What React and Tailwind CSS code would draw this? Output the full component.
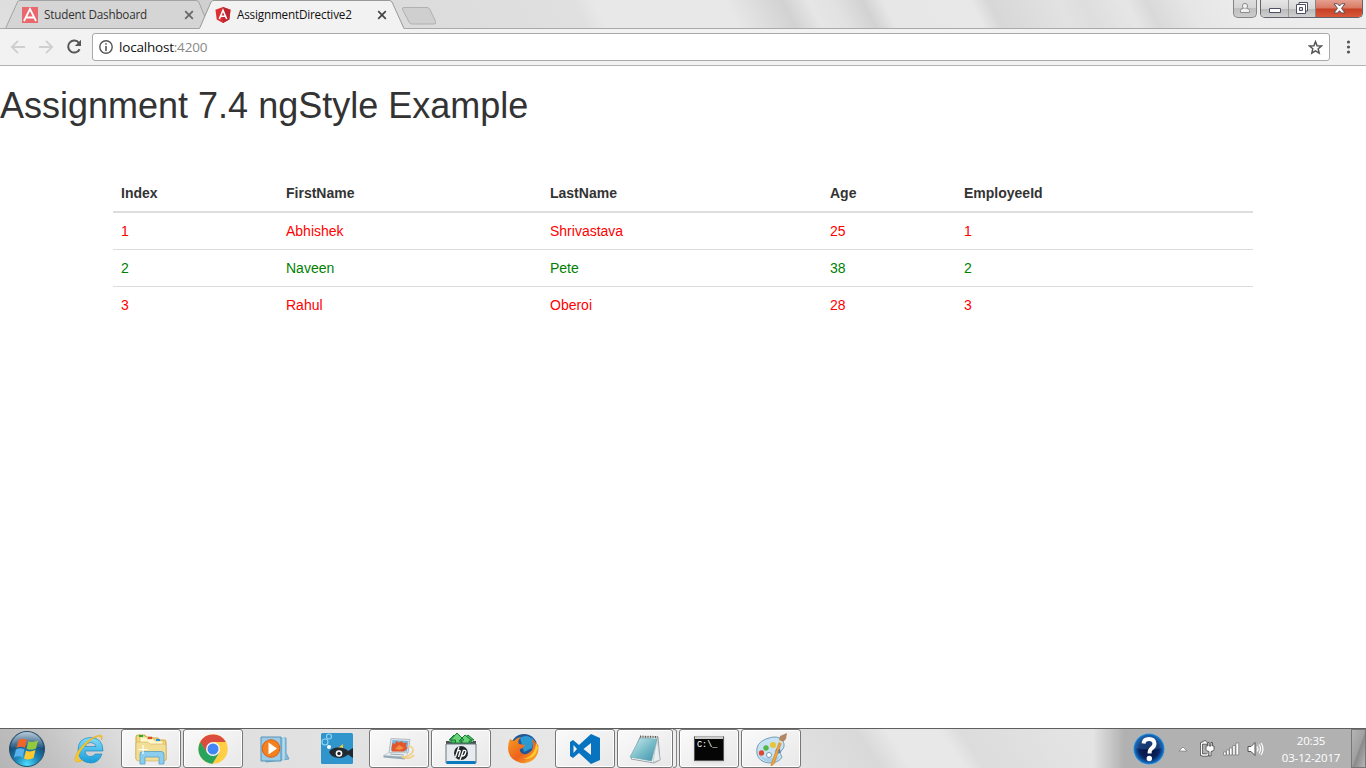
import React from "react";

const people = [
  { id: 1, first: "Abhishek", last: "Shrivastava", age: 25 },
  { id: 2, first: "Naveen", last: "Pete", age: 38 },
  { id: 3, first: "Rahul", last: "Oberoi", age: 28 },
];

function CloseX({ className }) {
  return (
    <svg className={className} width="10" height="10" viewBox="0 0 10 10">
      <path d="M1.2 1.2 8.8 8.8M8.8 1.2 1.2 8.8" stroke="currentColor" strokeWidth="1.7" />
    </svg>
  );
}

function TabStrip() {
  return (
    <div className="relative flex h-[29px] justify-between bg-[linear-gradient(63deg,#e0e0e0_0%,#cfcfcf_15%,#dcdcdc_31%,#e0e0e0_42.5%,#e8e8e8_44%,#e8e8e8_53.5%,#d2d2d2_57.7%,#e6e6e6_59.6%,#e1e1e1_61.5%,#d2d2d2_63.5%,#e7e7e7_65%,#e8e8e8_71.3%,#d7d7d7_72.6%,#e2e2e2_77.5%,#dedede_79.5%,#e6e6e6_82.5%,#d9d9d9_84%,#e6e6e6_87%,#ececec_91%,#eeeeee_100%)]">
      <svg className="absolute left-0 top-0" width="1366" height="29" viewBox="0 0 1366 29">
        <path d="M0 28.5H1366" stroke="#a9a9a9" />
        <path d="M5.5 28.5 17.5 2Q18 .5 20 .5H196Q198 .5 198.8 2L205 17 200 28.5Z" fill="#d5d5d5" stroke="#a3a3a3" />
        <path d="M199.500 28.500 211 2Q212 .5 214 .5H389Q391 .5 392 2L404 28.500V29H199Z" fill="#f2f2f2" />
        <path d="M199.500 28.500 211 2Q212 .5 214 .5H389Q391 .5 392 2L404 28.500" fill="none" stroke="#999" />
        <path d="M404 7.500H427Q429 7.500 430 9.500L435.500 21.500Q436.500 24 434 24H412Q410 24 409 22L402.500 9.500Q402 7.500 404 7.500Z" fill="#cfcfcf" stroke="#b0b0b0" />
      </svg>
      <div className="relative flex h-[29px] pl-[22px] font-['Open_Sans','Noto_Sans',sans-serif] text-[11.700px] tracking-[-0.180px] text-[#333]">
        <div className="flex w-[193px] items-center">
          <svg width="16" height="16" viewBox="0 0 16 16">
            <path fill="#e8686d" d="M0 0h16v16H0z" />
            <path d="M2 14 8 2l6 12M4.500 10.500h7" fill="none" stroke="#fff" strokeWidth="1.800" />
          </svg>
          <span className="ml-[6px] w-[134px] whitespace-nowrap">Student Dashboard</span>
          <CloseX className="ml-[6px] text-[#666]" />
        </div>
        <div className="flex w-[190px] items-center text-[#111]">
          <svg width="16" height="16" viewBox="0 0 16 16">
            <path d="M8 0 15.500 2.700 14.300 12.400 8 16 1.700 12.400.5 2.700Z" fill="#dd3036" />
            <path d="M8 0 15.500 2.700 14.300 12.400 8 16Z" fill="#bd2630" />
            <path d="M4.300 12 8 3.200 11.700 12M5.700 9.200h4.600" fill="none" stroke="#fff" strokeWidth="1.600" />
          </svg>
          <span className="ml-[6px] w-[134px] whitespace-nowrap">AssignmentDirective2</span>
          <CloseX className="ml-[6px] text-[#444]" />
        </div>
      </div>
      <div className="relative mr-[3px] flex h-[18px] gap-[3px]">
        <div className="flex w-[24px] justify-center rounded-b-[5px] border border-t-0 border-[#858585] bg-[linear-gradient(#dedede_0%,#d5d5d5_45%,#bfbfbf_50%,#cccccc_100%)] pt-[2px]">
          <svg width="12" height="12" viewBox="0 0 12 12" fill="#f1f1f1" stroke="#8c8c8c">
            <path d="M1.500 10.500V8.500Q1.500 6.500 4 6.500H8Q10.500 6.500 10.500 8.500V10.500Z" />
            <circle cx="6" cy="4" r="2.600" />
            <path d="M4.500 6.500H7.500V7.500H4.500Z" stroke="none" />
          </svg>
        </div>
        <div className="flex w-[103px] overflow-hidden rounded-b-[5px] border border-t-0 border-[#62626a]">
          <div className="flex w-[28px] justify-center border-r border-[#999] bg-[linear-gradient(#e6e6e6_0%,#d7d7d7_50%,#b9b9b9_52%,#d0d0d0_100%)] pt-[8px]">
            <svg width="12" height="6" viewBox="0 0 12 6"><path d="M.5.5h11v4H.5z" fill="#fff" stroke="#4e4e66" /></svg>
          </div>
          <div className="flex w-[27px] justify-center border-r border-[#888] bg-[linear-gradient(#e6e6e6_0%,#d7d7d7_50%,#b9b9b9_52%,#d0d0d0_100%)] pt-[2px]">
            <svg width="12" height="12" viewBox="0 0 12 12" fill="#fff" stroke="#4e4e66">
              <path d="M3 .5h8.500V9H3z" /><path d="M.5 2.500H9.500v9H.5z" /><path d="M3.500 5.500h3v3H3.500z" fill="#ddd" />
            </svg>
          </div>
          <div className="flex flex-1 justify-center bg-[linear-gradient(#e5a08f_0%,#d97863_48%,#c63f24_52%,#d9583b_100%)] pt-[3px]">
            <svg width="13" height="11" viewBox="0 0 13 11">
              <path d="M1 .8H4.500L6.500 3 8.500.8H12L8.500 5.300 12 10H8.500L6.500 7.700 4.500 10H1L4.500 5.300Z" fill="#fff" stroke="#59505e" />
            </svg>
          </div>
        </div>
      </div>
    </div>
  );
}

function Toolbar() {
  return (
    <div className="flex h-[37px] items-center border-b border-[#b3b3b3] bg-[#f2f2f2] pl-[10px]">
      <svg width="74" height="16" viewBox="0 0 74 16" fill="none" strokeWidth="1.800">
        <path d="M15 8H2M8 1.800 1.800 8 8 14.200" stroke="#cfcfcf" />
        <path d="M29 8h13M36 1.800 42.200 8 36 14.200" stroke="#cfcfcf" />
        <path d="M69 4A6 6 0 1 0 69.600 10.200" stroke="#555" strokeWidth="2" />
        <path d="M71 .8V7H64.800Z" fill="#555" />
      </svg>
      <div className="ml-[8px] flex h-[28px] w-[1238px] items-center rounded-[3px] border border-[#a9a9a9] bg-white px-[6px]">
        <svg width="14" height="14" viewBox="0 0 14 14">
          <circle cx="7" cy="7" r="6.200" fill="none" stroke="#555" strokeWidth="1.400" />
          <path d="M6.200 3.200h1.600v1.600H6.200zM6.200 6h1.600v5H6.200z" fill="#555" />
        </svg>
        <span className="ml-[6px] flex-1 font-['Open_Sans','Noto_Sans',sans-serif] text-[13.500px] tracking-[-0.200px] text-[#111]">
          localhost<span className="text-[#888]">:4200</span>
        </span>
        <svg width="15" height="15" viewBox="0 0 15 15">
          <path d="M7.500 1.700 9.100 5.700 13.500 6 10.200 8.800 11.200 13.200 7.500 10.900 3.800 13.200 4.800 8.800 1.500 6 5.900 5.700Z" fill="none" stroke="#555" strokeWidth="1.500" />
        </svg>
      </div>
      <svg className="ml-[16px]" width="5" height="14" viewBox="0 0 5 14" fill="#555">
        <circle cx="2.500" cy="2" r="1.600" /><circle cx="2.500" cy="7" r="1.600" /><circle cx="2.500" cy="12" r="1.600" />
      </svg>
    </div>
  );
}

function Page() {
  return (
    <main className="flex-1 bg-white text-[14px] leading-[20px] text-[#333]">
      <h1 className="pt-[20px] text-[36px] font-normal leading-[40px]">Assignment 7.4 ngStyle Example</h1>
      <table className="mx-[113px] mt-[49px] w-[1140px] table-fixed border-collapse text-left">
        <colgroup>
          <col className="w-[165px]" /><col className="w-[264px]" /><col className="w-[280px]" /><col className="w-[134px]" /><col className="w-[297px]" />
        </colgroup>
        <thead>
          <tr className="h-[37px] border-b-2 border-[#ddd]">
            {["Index", "FirstName", "LastName", "Age", "EmployeeId"].map((h) => (
              <th key={h} className="p-[8px] font-bold">{h}</th>
            ))}
          </tr>
        </thead>
        <tbody>
          {people.map((p) => (
            <tr key={p.id} className={`h-[37px] border-t border-[#ddd] first:border-t-2 ${p.age > 30 ? "text-[#008000]" : "text-[#ff0000]"}`}>
              {[p.id, p.first, p.last, p.age, p.id].map((v, i) => (
                <td key={i} className="p-[8px]">{v}</td>
              ))}
            </tr>
          ))}
        </tbody>
      </table>
    </main>
  );
}

function StartOrb() {
  return (
    <svg width="40" height="38" viewBox="0 0 40 38">
      <defs>
        <radialGradient id="orb" cx=".5" cy=".95" r=".95"><stop offset="0" stopColor="#4de0ff" /><stop offset=".35" stopColor="#1d86b8" /><stop offset=".7" stopColor="#174a76" /><stop offset="1" stopColor="#5c87a5" /></radialGradient>
        <linearGradient id="orbShine" x2="0" y2="1"><stop stopColor="#fff" stopOpacity=".55" /><stop offset="1" stopColor="#fff" stopOpacity=".08" /></linearGradient>
      </defs>
      <circle cx="20" cy="19" r="17.500" fill="url(#orb)" stroke="#294d68" />
      <path d="M4 18A16 16 0 0 1 36 18Q20 13 4 18Z" fill="url(#orbShine)" />
      <path d="M11.500 10Q15.500 7.500 20 10L18 18Q14 15.500 9.500 18Z" fill="#ef652b" />
      <path d="M21.500 11Q25 13 31 10.500L29 18.500Q23.500 21 19.500 18.500Z" fill="#93c93d" />
      <path d="M9 19.500Q13.500 17 17.500 19.500L15.500 27.500Q12 25 7 27.500Z" fill="#58b2ec" />
      <path d="M19 20.500Q23 22.500 28.500 20L26.500 28Q21.500 30.500 17 28.500Z" fill="#fdc92f" />
    </svg>
  );
}

function IeIcon() {
  return (
    <svg width="32" height="32" viewBox="0 0 32 32">
      <defs><linearGradient id="ie" x2="0" y2="1"><stop stopColor="#83dcfb" /><stop offset="1" stopColor="#159bdb" /></linearGradient></defs>
      <path d="M30 18H12Q12.500 23.500 17.500 23.500 20.500 23.500 22 21H29Q26 30 17.500 30 5 29 5 17 5 5 17.500 4.500 30 5 30 18ZM12 13.500H23Q22 9.500 17.500 9.500T12 13.500Z" fill="url(#ie)" stroke="#2288bd" strokeWidth=".7" />
      <path d="M28.500 7Q31 1 25 2.500 18 4 9.500 12.500 1 22 2 27 3 31 10 27 5 28 5 24.500 6 18 15 9.500 24 2 27.500 3.500 29 4.500 28.500 7Z" fill="#f8c928" stroke="#e5a814" strokeWidth=".5" />
    </svg>
  );
}

function FolderIcon() {
  return (
    <svg width="34" height="32" viewBox="0 0 34 32">
      <path d="M2 26V4Q2 2 4 2H11L12 4H18L19 5H24L25 7H30Q32 7 32 9V27H3Z" fill="#f4d978" stroke="#caa644" />
      <path d="M6 4H13V6H20L21 8H29V25H6Z" fill="#fff8cf" stroke="#d8b960" strokeWidth=".6" />
      <path d="M2 11Q2 9 4 9H14L16 11H30Q32 11 32 13V25Q32 28 30 28H4Q2 28 2 25Z" fill="#f2df95" stroke="#cdb061" strokeWidth=".6" />
      <path d="M5 3H9" stroke="#20ae37" strokeWidth="2" /><path d="M14 5H18" stroke="#e04736" strokeWidth="2" /><path d="M22 7H26" stroke="#2a91d9" strokeWidth="2" />
      <path d="M6 31V21Q6 18.500 9 18.500H27Q30 18.500 30 21V31H25V24H11V31Z" fill="#8bcdee" stroke="#5b9ec2" strokeWidth=".8" />
      <path d="M9 12V21M4.500 16.500H13.500" stroke="#fff" strokeWidth="1.200" />
    </svg>
  );
}

function ChromeIcon() {
  return (
    <svg width="32" height="32" viewBox="0 0 32 32">
      <circle cx="16" cy="16" r="14.700" fill="#ffce43" />
      <path d="M16 16 16 9H28.800A14.700 14.700 0 0 0 3.200 9L10 20Z" fill="#db4b3e" />
      <path d="M3.200 9A14.700 14.700 0 0 0 15.500 30.700L22 20 16 22.500 10 19.500Z" fill="#27a45d" />
      <circle cx="16" cy="16" r="7" fill="#f5f5f5" /><circle cx="16" cy="16" r="5.500" fill="#4285f4" />
    </svg>
  );
}

function MediaIcon() {
  return (
    <svg width="32" height="32" viewBox="0 0 32 32">
      <path d="M4 5H27V20L30 26 7 29Z" fill="#86bad8" stroke="#6ba3c4" />
      <path d="M25 5V27M22 4H24V28" fill="none" stroke="#c5e8f8" />
      <path d="M2 4H22V28H2Z" fill="#9acbe7" stroke="#5793b5" />
      <circle cx="12" cy="15.500" r="8.800" fill="#f48120" stroke="#dd5f0e" /><path d="M9.500 9.500 18 15.500 9.500 21.500Z" fill="#fff" />
    </svg>
  );
}

function FishIcon() {
  return (
    <svg width="32" height="32" viewBox="0 0 32 32">
      <rect width="32" height="31" rx="1.500" fill="#3095cc" />
      <g fill="none" stroke="#94d5f4" strokeWidth="1.100"><circle cx="8" cy="3.500" r="2.500" /><circle cx="4" cy="9" r="3" /></g>
      <circle cx="8" cy="14" r="2" fill="#fff" /><path d="M17 15 22 11V15Z" fill="#f6c936" />
      <path d="M8 19Q11 14 18 14.500 24 14.500 27 18L32 15V25L27 21.500Q22 26 15 24.500 10 23.500 8 19Z" fill="#222a31" />
      <circle cx="18" cy="20.500" r="3.300" fill="#fff" /><circle cx="18" cy="20.500" r="1.700" fill="#222" />
    </svg>
  );
}

function LaptopIcon() {
  return (
    <svg width="34" height="32" viewBox="0 0 34 32">
      <path d="M9 5.500 28 6.500 26 20 7 19.500Z" fill="#dfe5ea" stroke="#b1bcc6" />
      <path d="M10.500 7 26.500 8 25 18.500 9 18Z" fill="#77b7df" />
      <path d="M9.500 15 10.500 10 13 11 14 8 17 9.500 20 8 21 10 25 9.500 24 13 25.500 15 22 18.500H10Z" fill="#e3552b" />
      <path d="M13 16 17 12 22 15 18 17Z" fill="#f28d45" />
      <path d="M7 19.500 26 20 23 24 1.500 22.500Z" fill="#eef2f5" stroke="#b6c2ca" strokeWidth=".7" /><path d="M8 21 22 22" stroke="#9ba9b4" />
      <path d="M1.500 22.500V24.500L23 26.500V24Z" fill="#96a9b7" />
      <path d="M26 13Q32 14 31 18 29 24 20 24 28 27 32 22" fill="none" stroke="#f3cd80" strokeWidth="1.500" />
    </svg>
  );
}

function HpIcon() {
  return (
    <svg width="32" height="34" viewBox="0 0 32 34">
      <path d="M1 12V9H4L6 10H27L28 9H31V12Z" fill="#4a5258" />
      <path d="M6 11V8H4L9 3 15 8H13V11ZM19 11V8H17L23 3 29 8H26V11Z" fill="#47bd61" stroke="#187b36" />
      <path d="M10.500 11V8H5.500L12 1 19 8H16V11ZM17 11V9H14L20 3 27 9H24V11Z" fill="#66d477" stroke="#187b36" />
      <path d="M1 12H31V31H1Z" fill="#e7ebef" stroke="#6b7982" /><path d="M1.500 29H30.500V32H1.500Z" fill="#087bbe" />
      <circle cx="16" cy="21" r="7" fill="#20272c" />
      <path d="M14 14.500 10.500 25M12.500 19Q16 17.500 15 20L13.500 25M18.500 18 15 28M18 18.500Q22 17.500 20.500 21 19.500 24.500 16.500 24" fill="none" stroke="#fff" strokeWidth="1.300" />
    </svg>
  );
}

function FirefoxIcon() {
  return (
    <svg width="32" height="32" viewBox="0 0 32 32">
      <defs><linearGradient id="fox" x2="1" y2="1"><stop stopColor="#f79c20" /><stop offset=".55" stopColor="#ed621e" /><stop offset="1" stopColor="#fac22d" /></linearGradient></defs>
      <circle cx="17" cy="14.500" r="13.500" fill="#215795" /><path d="M13 5Q20 0 27 7L25 15 17 19Z" fill="#2d99d1" />
      <path d="M3 6 7 8Q9 5 14 4 10 8 12 11L18 12Q17 15 13 16 12 19 16 21 21 22 25 17 27 12 25 6 29 8 30 13L31 11Q33 21 26 27 18 33 9 28 1 24 1 15 1 10 3 6Z" fill="url(#fox)" />
      <path d="M29 9Q29 22 17 26 28 27 31 15Z" fill="#ffcb2d" />
    </svg>
  );
}

function CodeIcon() {
  return (
    <svg width="32" height="32" viewBox="0 0 32 32">
      <path d="M22 1 31 5V27L22 31 10 20 4 25 1 23V9L4 7 10 12ZM22 10 14.500 16 22 22ZM4.500 12V20L8 16Z" fill="#0873be" fillRule="evenodd" />
    </svg>
  );
}

function NotepadIcon() {
  return (
    <svg width="34" height="34" viewBox="0 0 34 34">
      <defs><linearGradient id="note" x2="1" y2="1"><stop stopColor="#d2eef1" /><stop offset=".55" stopColor="#75bac7" /><stop offset="1" stopColor="#438eab" /></linearGradient></defs>
      <path d="M12 5 30 5 32 28 26 31 3 27Z" fill="#f8fbfc" stroke="#9ba3a6" />
      <path d="M29 6 32 28 25 30Z" fill="#e9eeef" stroke="#a0aaac" strokeWidth=".5" />
      <path d="M12 6 29 7 23.500 29 2 25Z" fill="url(#note)" stroke="#67a1ae" strokeWidth=".6" />
      <path d="M12 4.500 30 5" stroke="#625d50" strokeWidth="2" strokeDasharray="1 1.500" />
    </svg>
  );
}

function CommandIcon() {
  return (
    <div className="h-[25px] w-[30px] border border-[#555] border-t-[#b2b2b2] bg-[#050505] font-['Liberation_Mono',monospace] text-[8.500px] leading-[9px] text-white shadow">
      <div className="h-[2px] bg-[#ccc]" />
      <div className="pl-[2px] pt-[2px]">C:\_</div>
    </div>
  );
}

function PaintIcon() {
  return (
    <svg width="34" height="34" viewBox="0 0 34 34">
      <path d="M3 22Q1 11 12 7 24 2 29 9 32 15 27 19 25 21 28 25 25 31 15 31 5 30 3 22Z" fill="#c7e2f2" stroke="#729ebc" />
      <path d="M5 23Q14 29 26 24 23 31 15 30 8 29 5 23Z" fill="#a9cee8" />
      <circle cx="15" cy="23" r="2.500" fill="#fff" stroke="#7598ae" />
      <circle cx="7.500" cy="21" r="2.700" fill="#d94735" /><circle cx="12" cy="16" r="2.700" fill="#55b548" /><circle cx="19" cy="13" r="3" fill="#eac533" /><circle cx="24" cy="19" r="2.500" fill="#487bc8" />
      <path d="M28 9 20 32 17 34 17.500 31 26 8Z" fill="#f1a63b" stroke="#c77726" strokeWidth=".6" />
      <path d="M25 8 26 4 33 1 32 7 29 10Z" fill="#b18863" /><path d="M25 8 29.500 10 28.500 12 25 10Z" fill="#e0dec8" />
    </svg>
  );
}

const apps = [
  { name: "ie", Icon: IeIcon },
  { name: "files", Icon: FolderIcon, open: true },
  { name: "chrome", Icon: ChromeIcon, open: true },
  { name: "media", Icon: MediaIcon },
  { name: "fish", Icon: FishIcon },
  { name: "laptop", Icon: LaptopIcon, open: true },
  { name: "hp", Icon: HpIcon, open: true },
  { name: "firefox", Icon: FirefoxIcon },
  { name: "code", Icon: CodeIcon, open: true },
  { name: "notepad", Icon: NotepadIcon, open: true, stacked: true },
  { name: "command", Icon: CommandIcon, open: true },
  { name: "paint", Icon: PaintIcon, open: true },
];

function Taskbar() {
  return (
    <footer className="flex h-[40px] justify-between border-t border-[#5e5e5e] bg-[linear-gradient(90deg,transparent_0%,transparent_80%,#b1b1b1_82.3%,#b1b1b1_100%),linear-gradient(57deg,#b5b5b5_0%,#c1c1c1_4%,#dcdcdc_10%,#e0e0e0_20%,#e5e5e5_35%,#eaeaea_55%,#e0e0e0_58%,#d9d9d9_63.3%,#e8e8e8_65.5%,#e8e8e8_69.3%,#dcdcdc_70.8%,#e4e4e4_79%,#e4e4e4_100%)]">
      <div className="flex gap-[2px]">
        <div className="flex w-[57px] items-center pl-[7px]"><StartOrb /></div>
        {apps.map(({ name, Icon, open, stacked }) => (
          <div key={name} className="flex w-[60px]">
            <div className={`flex items-center justify-center ${stacked ? "w-[56px]" : "w-[60px]"} ${open ? "rounded-[3px] border border-[#777] bg-gradient-to-br from-[#fafafa] to-[#e8e8e8] shadow-[inset_0_0_0_1px_#ffffff]" : ""}`}>
              <Icon />
            </div>
            {stacked && <div className="w-[4px] rounded-r-[3px] border border-l-0 border-[#858585] bg-[#eee]" />}
          </div>
        ))}
      </div>
      <div className="flex items-center">
        <svg width="32" height="32" viewBox="0 0 32 32">
          <defs><radialGradient id="help"><stop stopColor="#061039" /><stop offset=".65" stopColor="#0a2260" /><stop offset=".9" stopColor="#1467b8" /><stop offset="1" stopColor="#2b9be6" /></radialGradient></defs>
          <circle cx="16" cy="16" r="15.500" fill="url(#help)" />
          <path d="M3 15A13 12 0 0 1 29 15Q16 18 3 15Z" fill="#3d78bb" opacity=".35" />
          <path d="M10.500 10.500Q11 6 16 6T21.500 10.500Q21.500 13.500 18.500 15.500 16.500 17 16.500 20.500" fill="none" stroke="#fff" strokeWidth="4" /><circle cx="16.300" cy="25.500" r="2.700" fill="#fff" />
        </svg>
        <svg className="ml-[13px]" width="10" height="6" viewBox="0 0 10 6"><path d="M1 5 5 1 9 5Z" fill="#fff" stroke="#777" strokeWidth=".7" /></svg>
        <svg className="ml-[11px]" width="17" height="18" viewBox="0 0 17 18" fill="none">
          <path d="M8 3H3.500Q2.500 3 2.500 4V14Q2.500 15 3.500 15H8Q9 15 9 14M4.500 2H7" stroke="#444" strokeWidth="3" />
          <path d="M8 3H3.500Q2.500 3 2.500 4V14Q2.500 15 3.500 15H8Q9 15 9 14M4.500 2H7" stroke="#fff" strokeWidth="1.400" />
          <path d="M7 6H8.500V2.500H10V6H12V2.500H13.500V6H15V9.500Q15 11 12 11.500V16H10V11.500Q7 11 7 9.500Z" fill="#fff" stroke="#444" strokeWidth=".8" />
        </svg>
        <svg className="ml-[7px]" width="17" height="14" viewBox="0 0 17 14" fill="#fff" stroke="#666" strokeWidth=".6">
          <path d="M.5 10h2.500v3H.5zM3.500 8h2.500v5H3.500zM6.500 6h2.500v7H6.500zM9.700 3.500h2.500V13H9.700zM13 1h2.700v12H13z" />
        </svg>
        <svg className="ml-[7px]" width="17" height="16" viewBox="0 0 17 16">
          <path d="M1 5.500H4L8 1.500V14.500L4 10.500H1Z" fill="#fff" stroke="#555" />
          <path d="M10 5.500Q12 8 10 10.500M12 3.500Q15 8 12 12.500M14 2Q18 8 14 14" fill="none" stroke="#fff" strokeWidth="1.200" />
        </svg>
        <div className="ml-[15px] w-[64px] text-center font-['Open_Sans','Noto_Sans',sans-serif] text-[11.500px] leading-[17px] tracking-[-0.150px] text-white">
          <div>20:35</div><div className="whitespace-nowrap">03-12-2017</div>
        </div>
        <div className="ml-[8px] h-[39px] w-[15px] border border-[#777] bg-[linear-gradient(110deg,#b5b5b5_0%,#a0a0a0_50%,#8a8a8a_56%,#b5b5b5_100%)]" />
      </div>
    </footer>
  );
}

export default function App() {
  return (
    <div className="flex h-[768px] w-[1366px] flex-col overflow-hidden bg-white font-['Liberation_Sans',Arial,sans-serif]">
      <TabStrip />
      <Toolbar />
      <Page />
      <Taskbar />
    </div>
  );
}
